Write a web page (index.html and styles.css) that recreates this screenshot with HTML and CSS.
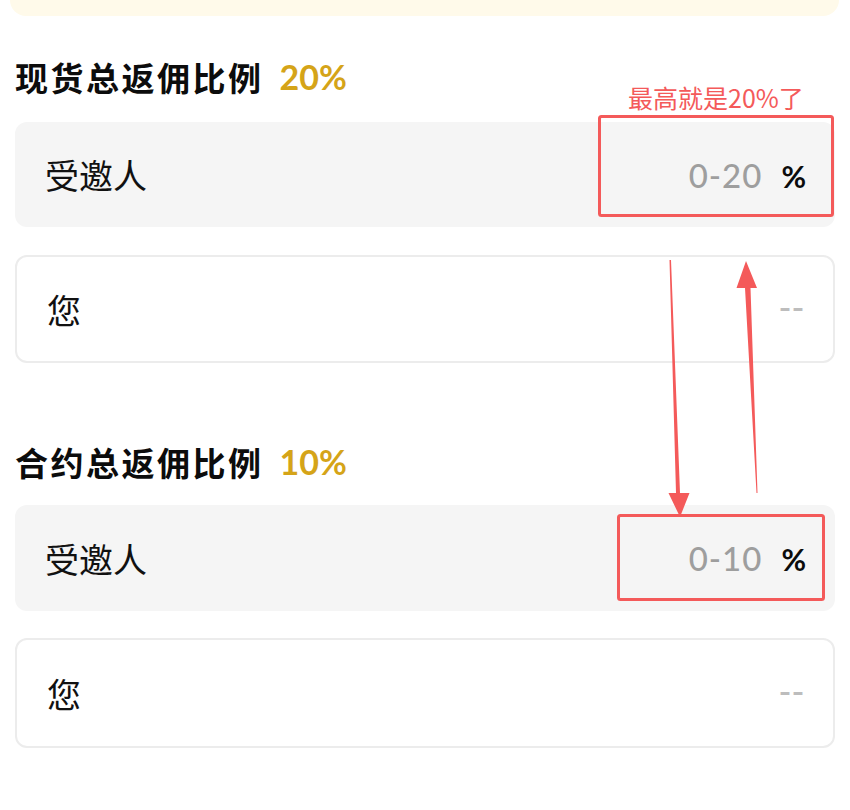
FILE: index.html
```html
<!DOCTYPE html>
<html lang="zh-CN">
<head>
<meta charset="utf-8">
<link rel="stylesheet" href="styles.css">
</head>
<body>
<div class="page">
  <div class="topbar"></div>

  <section class="group first">
    <h2 class="title">现货总返佣比例<span class="rate">20%</span></h2>
    <div class="row filled">
      <span class="label">受邀人</span>
      <span class="value"><span class="range">0-20</span><span class="unit">%</span></span>
    </div>
    <div class="row outlined">
      <span class="label">您</span>
      <span class="dash">--</span>
    </div>
  </section>

  <section class="group second">
    <h2 class="title">合约总返佣比例<span class="rate">10%</span></h2>
    <div class="row filled">
      <span class="label">受邀人</span>
      <span class="value"><span class="range">0-10</span><span class="unit">%</span></span>
    </div>
    <div class="row outlined tall">
      <span class="label">您</span>
      <span class="dash">--</span>
    </div>
  </section>

  <div class="note">最高就是20%了</div>
  <svg class="marks" width="850" height="810" viewBox="0 0 850 810" xmlns="http://www.w3.org/2000/svg">
    <rect x="599.5" y="116.5" width="233" height="99" rx="2" fill="none" stroke="#f45a5a" stroke-width="3"/>
    <rect x="618.5" y="515.5" width="205" height="84" rx="2" fill="none" stroke="#f45a5a" stroke-width="3"/>
    <polygon points="669.5,260 671,260 680,493 689.5,493 680,517 668.5,493 676,493" fill="#f45a5a"/>
    <polygon points="746,261 757,288 750.5,288 757.5,493 756.5,493 745,288 736.5,288" fill="#f45a5a"/>
  </svg>
</div>
</body>
</html>
```

FILE: styles.css
```css
* { box-sizing: border-box; }
html, body { margin: 0; padding: 0; background: #ffffff; }
body {
  font-family: "Noto Sans CJK SC", "Noto Sans", sans-serif;
  color: #111111;
}
.page {
  position: relative;
  width: 850px;
  height: 810px;
  overflow: hidden;
}
.topbar {
  height: 16px;
  margin: 0 11px 0 10px;
  background: #fffaea;
  border-radius: 0 0 26px 26px;
}
.group { padding: 0 15px; }
.title {
  margin: 0;
  height: 40px;
  line-height: 40px;
  font-size: 33px;
  font-weight: 700;
  letter-spacing: 2.5px;
  color: #0c0c0c;
  display: flex;
  align-items: center;
}
.first .title { margin-top: 41px; }
.second .title { margin-top: 79px; }
.rate {
  font-family: "Lato", "Noto Sans", sans-serif;
  font-weight: 700;
  font-size: 34px;
  color: #d5a418;
  margin-left: 16px;
  letter-spacing: 0;
}
.row {
  display: flex;
  align-items: center;
  justify-content: space-between;
  padding: 0 29px 0 30px;
  border-radius: 12px;
}
.filled {
  background: #f5f5f5;
  height: 105px;
  margin-top: 25px;
}
.second .filled { margin-top: 23px; height: 106px; }
.outlined {
  border: 2px solid #ececec;
  height: 108px;
  margin-top: 28px;
}
.outlined.tall { height: 110px; margin-top: 27px; }
.label {
  font-size: 34px;
  font-weight: 400;
  color: #111111;
}
.value { display: flex; align-items: baseline; }
.range {
  font-family: "Lato", "Noto Sans", sans-serif;
  font-size: 33px;
  font-weight: 500;
  color: #9e9e9e;
  letter-spacing: 1px;
}
.unit {
  font-family: "Lato", "Noto Sans", sans-serif;
  font-size: 30px;
  font-weight: 700;
  color: #0c0c0c;
  margin-left: 19px;
}
.dash {
  font-family: "Liberation Sans", sans-serif;
  font-size: 36px;
  color: #bdbdbd;
  letter-spacing: 1px;
  margin-right: -1px;
  margin-top: -4px;
}
.note {
  position: absolute;
  left: 628px;
  top: 81px;
  font-size: 25px;
  line-height: 32px;
  color: #f45a5a;
  white-space: nowrap;
}
.marks {
  position: absolute;
  left: 0;
  top: 0;
  pointer-events: none;
}
```
